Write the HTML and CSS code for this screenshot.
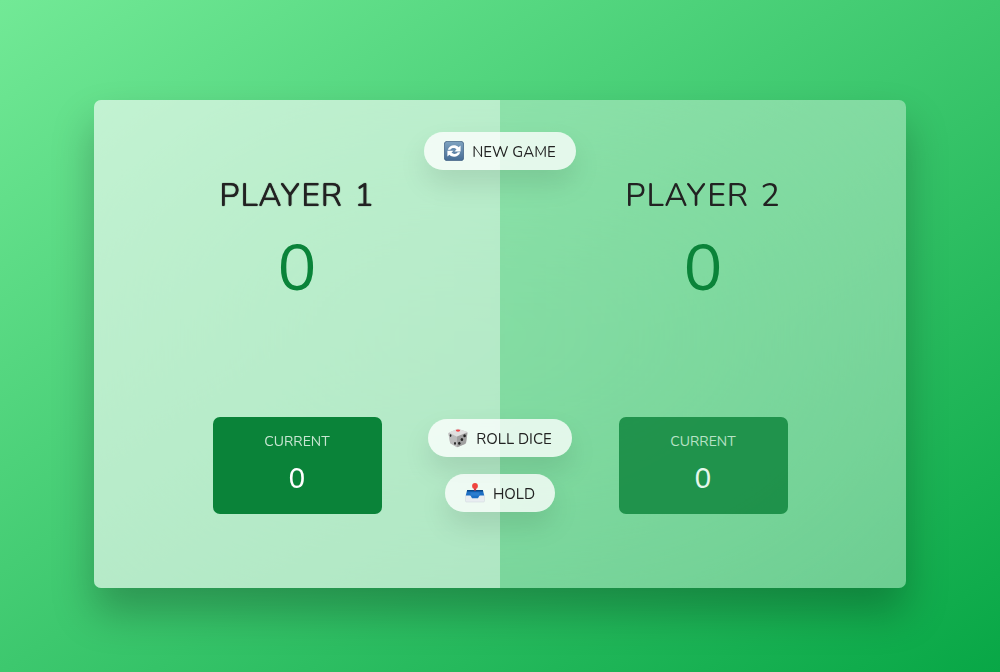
FILE: index.html
```html
<!DOCTYPE html>
<html lang="en">
<head>
<meta charset="utf-8">
<meta name="viewport" content="width=device-width, initial-scale=1">
<title>Pig Game</title>
<link rel="stylesheet" href="styles.css">
</head>
<body>
<main class="game">
  <section class="player player-active">
    <h2 class="name">PLAYER 1</h2>
    <p class="score">0</p>
    <div class="current">
      <p class="current-label">CURRENT</p>
      <p class="current-score">0</p>
    </div>
  </section>
  <section class="player">
    <h2 class="name">PLAYER 2</h2>
    <p class="score">0</p>
    <div class="current">
      <p class="current-label">CURRENT</p>
      <p class="current-score">0</p>
    </div>
  </section>
  <div class="controls">
    <button class="btn" type="button">
      <svg class="icon" viewBox="0 0 20 20" aria-hidden="true">
        <defs><linearGradient id="tile" x1="0" y1="0" x2="0" y2="1"><stop offset="0" stop-color="#7fa3c0"/><stop offset="1" stop-color="#456b94"/></linearGradient></defs>
        <rect x=".4" y=".4" width="19.2" height="19.2" rx="2.6" fill="url(#tile)" stroke="#436285" stroke-width=".8"/>
        <path d="M3.800 8.800C5 4.200 11 2.600 14.600 6.200L16.600 4.400V10.600H10.400L12.500 8.400C10.500 6.400 7.600 6.800 6.300 8.800z" fill="#fff"/>
        <path d="M16.200 11.200C15 15.800 9 17.400 5.400 13.800L3.400 15.600V9.800H9.600L7.500 11.600C9.500 13.600 12.400 13.200 13.700 11.200z" fill="#fff"/>
      </svg>
      NEW GAME
    </button>
    <div class="actions">
      <button class="btn" type="button">
        <svg class="icon" viewBox="0 0 20 20" aria-hidden="true">
          <path d="M1 4.600Q.3 4.900.5 6L2 14.300q.2 1 1 1.500L8.300 19q.7.400 1.500.1l7.200-3.200q.9-.4 1.100-1.400L19.500 5q.1-.9-.7-1.200L10.700 1Q10 .7 9.300 1z" fill="#c9c9c9"/>
          <path d="M.6 5l8.200 3.600.4 10.600L3 15.800q-.8-.5-1-1.500L.5 6z" fill="#bcbcbc"/>
          <path d="M8.800 8.600 19.400 4.500 18.100 14.500q-.2 1-1.100 1.400L9.200 19.200z" fill="#a0a0a0"/>
          <path d="M1 4.600 9.300 1Q10 .7 10.700 1l8.400 3L8.800 8.600z" fill="#e0e0e0"/>
          <ellipse cx="10" cy="2.600" rx="2.200" ry="1.100" fill="#ef4b4b"/>
          <g fill="#222"><ellipse cx="2.600" cy="7.600" rx=".8" ry="1.300"/><ellipse cx="7" cy="15.400" rx=".9" ry="1.400"/><ellipse cx="16.600" cy="7.800" rx="1.300" ry="1.500"/><ellipse cx="13.900" cy="11.500" rx="1.300" ry="1.500"/><ellipse cx="11.300" cy="15.200" rx="1.200" ry="1.500"/></g>
        </svg>
        ROLL DICE
      </button>
      <button class="btn" type="button">
        <svg class="icon" viewBox="0 0 20 20" aria-hidden="true">
          <path d="M2.500 8h15l2 5v5q0 1-1 1h-17q-1 0-1-1v-5z" fill="#e9edf1" stroke="#cfd6dc" stroke-width=".5"/>
          <path d="M2.200 7h15.600l1.400 5.500h-4.700l-1.500 2.700H7l-1.500-2.700H.8z" fill="#1c6fc4"/>
          <path d="M2.200 7h15.600l.4 1.500H1.800z" fill="#084787"/>
          <path d="M5.500 9.500h9v3.200h-9z" fill="#2b7dce"/>
          <circle cx="10" cy="3" r="2.900" fill="#f0443e"/>
          <path d="M8.900 5.500h2.200v2H8.900z" fill="#c93d4c"/>
        </svg>
        HOLD
      </button>
    </div>
  </div>
</main>
</body>
</html>
```
FILE: styles.css
```css
* {
  box-sizing: border-box;
  margin: 0;
}

body {
  min-height: 100vh;
  display: flex;
  align-items: center;
  justify-content: center;
  padding: 32px;
  font-family: Nunito, Lato, sans-serif;
  font-weight: 400;
  color: #222;
  background: linear-gradient(to top left, #08a746 0%, #72e996 100%);
}

.game {
  position: relative;
  display: flex;
  width: 100%;
  max-width: 812px;
  min-height: 488px;
  margin-top: 16px;
  border-radius: 7px;
  background: rgba(255, 255, 255, 0.37);
  backdrop-filter: blur(162px);
  box-shadow: 0 24px 41px rgba(0, 0, 0, 0.25);
}

.player {
  flex: 1;
  display: flex;
  flex-direction: column;
  align-items: center;
  padding: 74px 73px;
}

.player-active {
  background: rgba(255, 255, 255, 0.4);
  border-radius: 7px 0 0 7px;
}

.name {
  font-size: 32px;
  line-height: 44px;
  font-weight: 400;
  letter-spacing: 1px;
  word-spacing: 2px;
  white-space: nowrap;
}

.player-active .name {
  text-shadow: 0 0 1px #222;
}

.score {
  margin-top: 7px;
  font-size: 65px;
  line-height: 88px;
  color: #0a8339;
}

.current {
  width: 65%;
  margin-top: auto;
  padding: 16px;
  border-radius: 7px;
  text-align: center;
  color: #fff;
  background: #0a8339;
  opacity: 0.8;
}

.player-active .current {
  opacity: 1;
}

.current-label {
  font-size: 14px;
  line-height: 18px;
  color: #c8e6d2;
}

.current-score {
  margin-top: 10px;
  font-size: 28px;
  font-weight: 500;
  line-height: 37px;
}

.controls {
  position: absolute;
  inset: 32px 0 76px;
  display: flex;
  flex-direction: column;
  align-items: center;
  justify-content: space-between;
  pointer-events: none;
}

.actions {
  display: flex;
  flex-direction: column;
  align-items: center;
  gap: 17px;
}

.btn {
  display: flex;
  align-items: flex-start;
  gap: 8px;
  padding: 9px 20px 7px;
  border: 0;
  border-radius: 40px;
  font: inherit;
  font-size: 15px;
  line-height: 22px;
  color: #222;
  background: rgba(255, 255, 255, 0.78);
  box-shadow: 0 14px 28px rgba(0, 0, 0, 0.1);
  cursor: pointer;
  pointer-events: auto;
}

.icon {
  width: 20px;
  height: 20px;
}
```
